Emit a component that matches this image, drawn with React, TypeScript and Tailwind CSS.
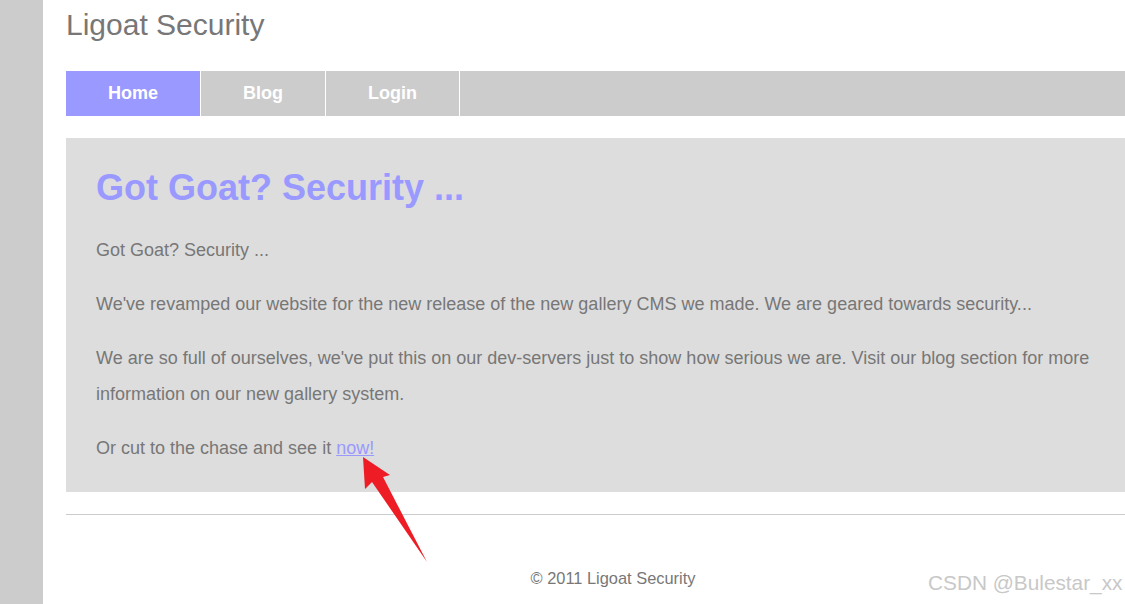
import React from "react";

export default function App() {
  return (
    <div className="relative h-[604px] w-[1125px] overflow-hidden bg-white" style={{ fontFamily: '"Liberation Sans", Arial, sans-serif' }}>
      <div className="flex h-full">
        <div className="w-[43px] shrink-0 bg-[#cccccc]" />
        <div className="ml-[23px] w-[1094px] shrink-0">
          <h1 className="pt-[8px] text-[30px] leading-[34px] text-[#777777]">Ligoat Security</h1>
          <nav className="mt-[29px] flex h-[45px] bg-[#cccccc] text-[18px] font-bold leading-[44px] text-white">
            <a className="w-[134px] bg-[#9999ff] text-center">Home</a>
            <div className="w-px bg-white" />
            <a className="w-[124px] text-center">Blog</a>
            <div className="w-px bg-white" />
            <a className="w-[133px] text-center">Login</a>
            <div className="w-px bg-white" />
          </nav>
          <div className="mt-[22px] bg-[#dddddd] px-[30px] pt-[32px] pb-[26px] text-[18px] leading-[36px] text-[#777777]">
            <h2 className="text-[36px] font-bold leading-[36px] text-[#9999ff]">Got Goat? Security ...</h2>
            <p className="mt-[26px]">Got Goat? Security ...</p>
            <p className="mt-[18px]">We've revamped our website for the new release of the new gallery CMS we made. We are geared towards security...</p>
            <p className="mt-[18px]">We are so full of ourselves, we've put this on our dev-servers just to show how serious we are. Visit our blog section for more information on our new gallery system.</p>
            <p className="mt-[18px]">
              Or cut to the chase and see it <a className="text-[#9999ff] underline">now!</a>
            </p>
          </div>
          <div className="mt-[22px] h-px bg-[#cccccc]" />
          <div className="mt-[54px] text-center text-[16.4px] leading-[18px] text-[#777777]">© 2011 Ligoat Security</div>
        </div>
      </div>
      <svg className="absolute left-0 top-0" width="1125" height="604" viewBox="0 0 1125 604">
        <polygon points="363,457 390,475 383,477 427,562 372,482 365,489" fill="#ee1c25" />
      </svg>
      <div className="absolute left-[928px] top-[571px] text-[20.8px] leading-[24px] text-[#c8c8c8]">CSDN @Bulestar_xx</div>
    </div>
  );
}
